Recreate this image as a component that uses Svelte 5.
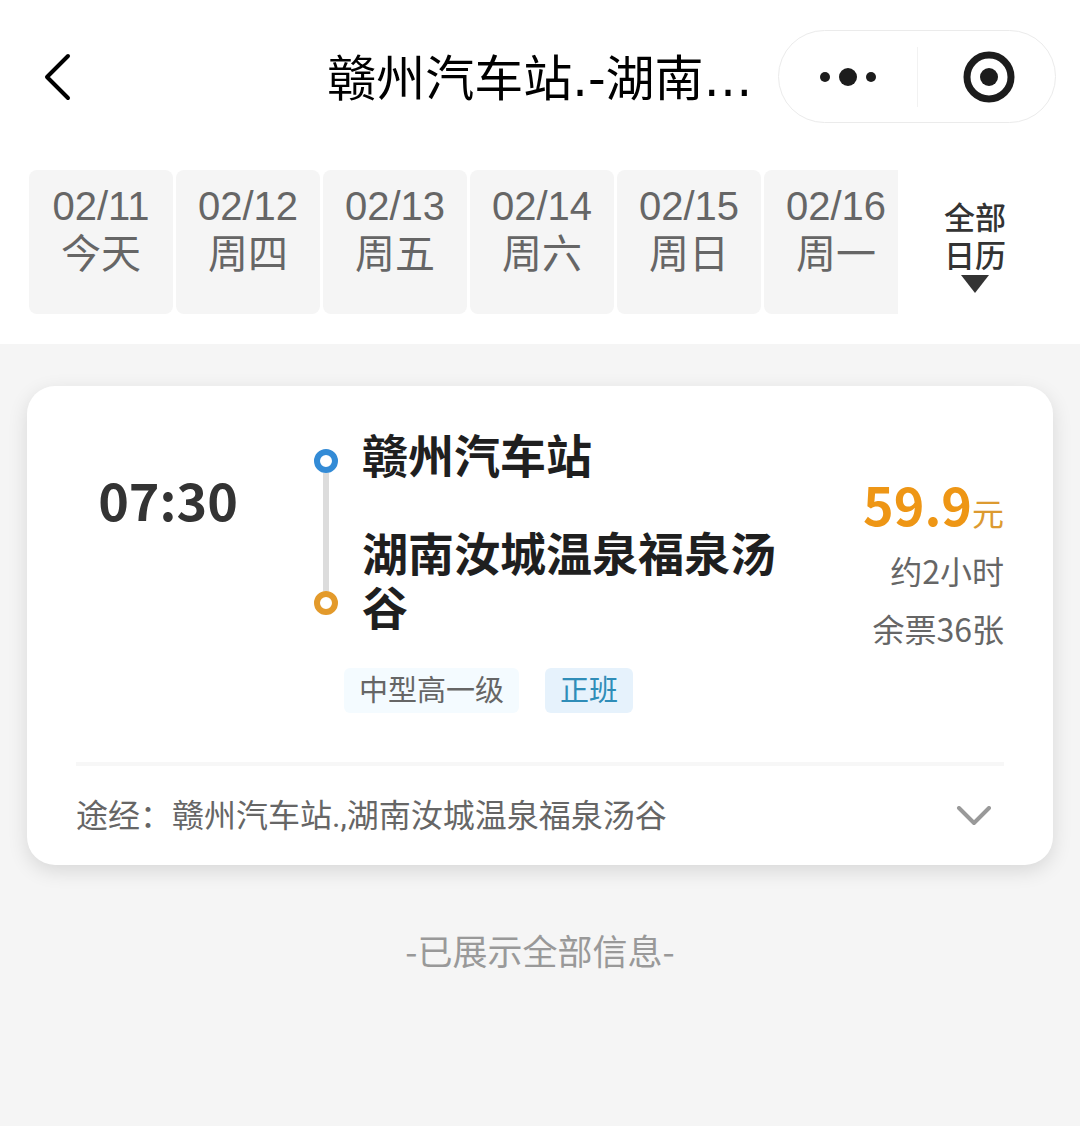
<script>
  const days = [
    { date: '02/11', label: '今天' },
    { date: '02/12', label: '周四' },
    { date: '02/13', label: '周五' },
    { date: '02/14', label: '周六' },
    { date: '02/15', label: '周日' },
    { date: '02/16', label: '周一' },
  ]

  const trip = {
    time: '07:30',
    from: '赣州汽车站',
    to: '湖南汝城温泉福泉汤谷',
    price: '59.9',
    duration: '约2小时',
    left: '余票36张',
    via: '赣州汽车站.,湖南汝城温泉福泉汤谷',
  }
</script>

<div class="top">
  <header>
    <button class="back" aria-label="返回">
      <svg width="30" height="48" viewBox="0 0 30 48">
        <path d="M26 3L5 24L26 45" />
      </svg>
    </button>
    <h1>赣州汽车站.-湖南…</h1>
    <div class="capsule">
      <button aria-label="更多">
        <svg width="56" height="20" viewBox="0 0 56 20">
          <circle cx="5" cy="10" r="5" />
          <circle cx="28" cy="10" r="9" />
          <circle cx="51" cy="10" r="5" />
        </svg>
      </button>
      <button aria-label="关闭">
        <svg width="52" height="52" viewBox="0 0 52 52">
          <circle class="ring" cx="26" cy="26" r="22" />
          <circle cx="26" cy="26" r="9" />
        </svg>
      </button>
    </div>
  </header>

  <nav>
    <div class="days">
      {#each days as day}
        <button class="day">
          <span class="date">{day.date}</span>
          <span>{day.label}</span>
        </button>
      {/each}
    </div>
    <button class="calendar">
      <span>全部</span>
      <span>日历</span>
      <svg width="28" height="18" viewBox="0 0 28 18">
        <path d="M0 0H28L14 18Z" />
      </svg>
    </button>
  </nav>
</div>

<main>
  <article>
    <div class="trip">
      <time>{trip.time}</time>
      <div class="rail">
        <i class="dot start"></i>
        <i class="line"></i>
        <i class="dot end"></i>
      </div>
      <div class="stations">
        <h2>{trip.from}</h2>
        <h2>{trip.to}</h2>
      </div>
      <div class="fare">
        <p class="price"><strong>{trip.price}</strong>元</p>
        <p>{trip.duration}</p>
        <p>{trip.left}</p>
      </div>
    </div>

    <div class="tags">
      <span class="tag">中型高一级</span>
      <span class="tag regular">正班</span>
    </div>

    <button class="via">
      <span class="text">途经：<span class="route">{trip.via}</span></span>
      <svg width="36" height="20" viewBox="0 0 36 20">
        <path d="M3 2L18 17L33 2" />
      </svg>
    </button>
  </article>

  <p class="finish">-已展示全部信息-</p>
</main>

<style>
  :global(body) {
    background: #f5f5f5;
    font-family: 'Noto Sans CJK SC', sans-serif;
    color: #666;
  }
  h1,
  h2,
  p {
    margin: 0;
  }
  button {
    padding: 0;
    border: 0;
    background: none;
    font: inherit;
    color: inherit;
    cursor: pointer;
  }
  svg {
    display: block;
  }

  .top {
    background: #fff;
    padding-bottom: 30px;
  }
  header {
    display: grid;
    grid-template-columns: 1fr auto 1fr;
    align-items: center;
    padding: 30px 24px 0;
  }
  .back {
    justify-self: start;
    padding-left: 18px;
  }
  .back path {
    fill: none;
    stroke: #000;
    stroke-width: 4;
    stroke-linecap: round;
    stroke-linejoin: round;
  }
  h1 {
    padding-top: 6px;
    font-family: 'DejaVu Sans', 'Noto Sans CJK SC', sans-serif;
    font-size: 49px;
    font-weight: 400;
    line-height: 60px;
    color: #000;
    white-space: nowrap;
  }
  .capsule {
    justify-self: end;
    display: flex;
    align-items: center;
    box-sizing: border-box;
    width: 278px;
    height: 93px;
    border: 1px solid #ebebeb;
    border-radius: 47px;
  }
  .capsule button {
    flex: 1 1 50%;
    display: flex;
    align-items: center;
    justify-content: center;
    box-sizing: border-box;
    height: 60px;
  }
  .capsule button + button {
    padding-left: 4px;
    border-left: 1px solid #f2f2f2;
  }
  .capsule circle {
    fill: #1c1c1c;
  }
  .capsule .ring {
    fill: none;
    stroke: #1c1c1c;
    stroke-width: 7;
  }

  nav {
    display: flex;
    margin-top: 47px;
    padding: 0 28px 0 29px;
  }
  .days {
    flex: 1;
    display: flex;
    gap: 3px;
    overflow: hidden;
  }
  .day {
    flex: 0 0 144px;
    display: flex;
    flex-direction: column;
    align-items: center;
    box-sizing: border-box;
    height: 144px;
    padding-top: 14px;
    border-radius: 8px;
    background: #f5f5f5;
    font-size: 40px;
    line-height: 45px;
  }
  .date {
    font-family: 'Liberation Sans', sans-serif;
  }
  .calendar {
    flex: 0 0 154px;
    display: flex;
    flex-direction: column;
    align-items: center;
    justify-content: center;
    padding-top: 6px;
    font-size: 31px;
    font-weight: 500;
    line-height: 38px;
    color: #333;
  }
  .calendar svg {
    margin-top: 2px;
  }
  .calendar path {
    fill: #333;
  }

  main {
    padding: 42px 27px;
  }
  article {
    padding: 0 49px;
    border-radius: 28px;
    background: #fff;
    box-shadow: 0 6px 20px rgba(0, 0, 0, 0.12);
  }
  .trip {
    display: flex;
    align-items: flex-start;
    padding-top: 40px;
  }
  time {
    flex: 0 0 184px;
    margin: 43px 54px 0 0;
    text-align: center;
    font-size: 52px;
    font-weight: 700;
    line-height: 60px;
    color: #333;
  }
  .rail {
    flex: 0 0 24px;
    display: flex;
    flex-direction: column;
    align-items: center;
    height: 166px;
    margin: 23px 24px 0 0;
  }
  .dot {
    box-sizing: border-box;
    width: 24px;
    height: 24px;
    border: 6px solid;
    border-radius: 50%;
  }
  .start {
    border-color: #338bd6;
  }
  .end {
    border-color: #e39a2b;
  }
  .line {
    flex: 1;
    width: 6px;
    background: #dcdcdc;
  }
  .stations {
    flex: 1;
    display: grid;
    gap: 44px;
  }
  h2 {
    font-size: 46px;
    font-weight: 700;
    line-height: 54px;
    color: #1f1f1f;
  }
  .fare {
    flex: 0 0 214px;
    margin-top: 49px;
    text-align: right;
    font-size: 32px;
    line-height: 58px;
  }
  .price {
    height: 58px;
    margin-bottom: 8px;
    color: #dc9a30;
  }
  .price strong {
    font-size: 52px;
    color: #ee9615;
  }

  .tags {
    display: flex;
    gap: 26px;
    padding: 11px 0 49px 268px;
  }
  .tag {
    padding: 0 15px 4px;
    border-radius: 6px;
    background: #f4fbff;
    font-size: 29px;
    line-height: 41px;
  }
  .regular {
    background: #e6f2fc;
    color: #2f8db8;
  }

  .via {
    display: flex;
    align-items: center;
    justify-content: space-between;
    width: 100%;
    height: 103px;
    padding-right: 12px;
    border-top: 4px solid #f7f7f7;
    text-align: left;
    font-size: 32px;
  }
  .text {
    padding-bottom: 6px;
  }
  .route {
    font-family: Roboto, 'Noto Sans CJK SC', sans-serif;
  }
  .via path {
    fill: none;
    stroke: #999;
    stroke-width: 4;
    stroke-linecap: round;
    stroke-linejoin: round;
  }

  .finish {
    margin-top: 61px;
    text-align: center;
    font-size: 35px;
    line-height: 48px;
    color: #999;
  }
</style>
